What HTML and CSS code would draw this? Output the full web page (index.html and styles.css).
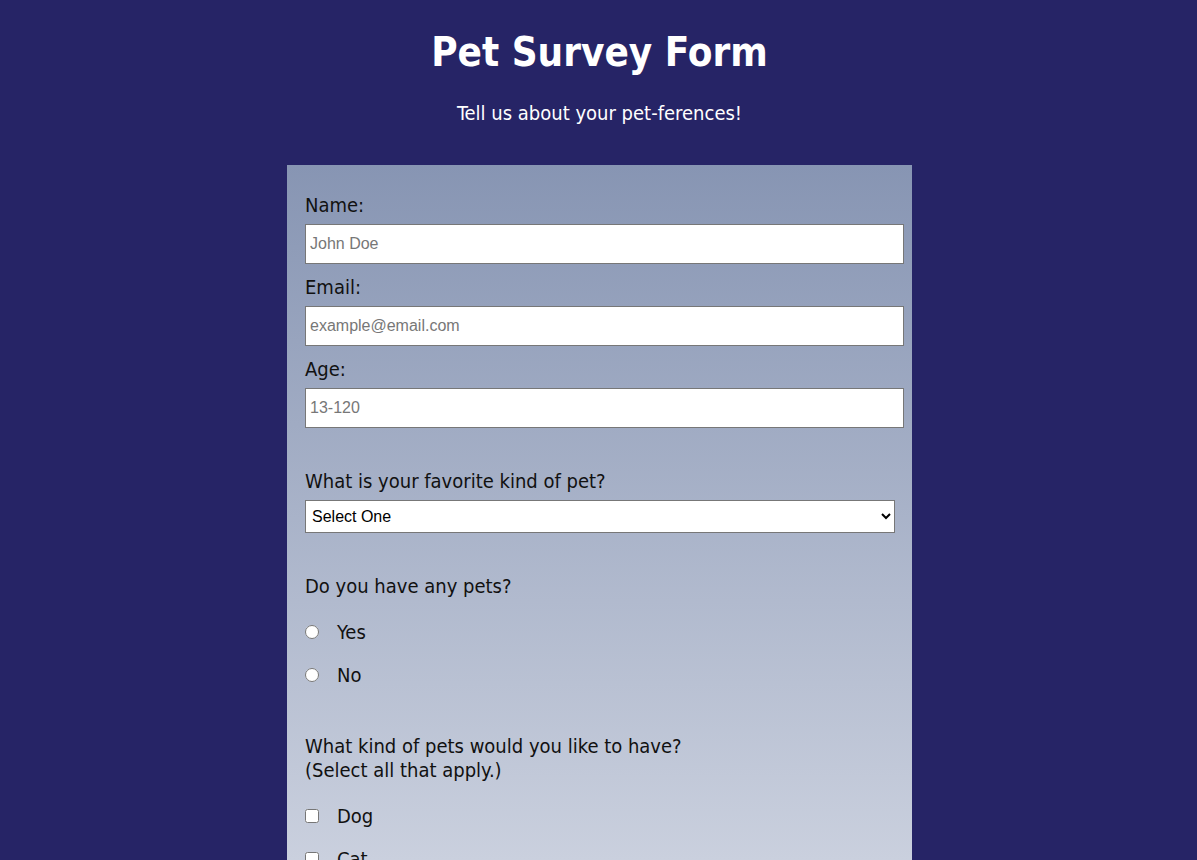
FILE: index.html
```html
<!DOCTYPE html>
<html lang="en">
<head>
<meta charset="utf-8">
<title>Pet Survey Form</title>
<link rel="stylesheet" href="styles.css">
</head>
<body>
<header class="header">
  <h1 class="title">Pet Survey Form</h1>
  <p class="description">Tell us about your pet-ferences!</p>
</header>
<form class="survey">
  <div class="field">
    <label class="label" for="name">Name:</label>
    <input class="text-input" id="name" type="text" placeholder="John Doe">
  </div>
  <div class="field">
    <label class="label" for="email">Email:</label>
    <input class="text-input" id="email" type="email" placeholder="example@email.com">
  </div>
  <div class="field">
    <label class="label" for="age">Age:</label>
    <input class="text-input" id="age" type="number" placeholder="13-120">
  </div>
  <div class="group">
    <label class="label" for="fav">What is your favorite kind of pet?</label>
    <select class="select" id="fav">
      <option>Select One</option>
      <option>Dog</option>
      <option>Cat</option>
    </select>
  </div>
  <div class="group">
    <p class="question">Do you have any pets?</p>
    <label class="choice"><input class="radio" type="radio" name="has"><span>Yes</span></label>
    <label class="choice"><input class="radio" type="radio" name="has"><span>No</span></label>
  </div>
  <div class="group group-last">
    <p class="question">What kind of pets would you like to have?<br>(Select all that apply.)</p>
    <label class="choice"><input class="check" type="checkbox"><span>Dog</span></label>
    <label class="choice"><input class="check" type="checkbox"><span>Cat</span></label>
  </div>
</form>
</body>
</html>
```
FILE: styles.css
```css
* { box-sizing: border-box; }
html, body { margin: 0; padding: 0; }
body {
  background: #262466;
  font-family: "DejaVu Sans Condensed", "DejaVu Sans", sans-serif;
  color: #111;
  min-height: 860px;
  padding-left: 2px;
}
.header { text-align: center; color: #fff; padding-top: 28px; }
.title { margin: 0; font-size: 40px; line-height: 48px; font-weight: bold; }
.description { margin: 25px 0 0; font-size: 20px; line-height: 24px; }
.survey {
  width: 625px;
  margin: 40px auto 0;
  padding: 28px 8px 40px 18px;
  background: linear-gradient(180deg, #8795b3 0px, #cad0de 695px, #e4e7ef 1100px);
  min-height: 1100px;
}
.field { display: flex; flex-direction: column; margin-bottom: 11px; }
.label, .question { display: block; font-size: 20px; line-height: 24px; margin: 0; }
.text-input {
  margin-top: 7px;
  height: 40px;
  width: 599px;
  border: 1px solid #777;
  border-radius: 0;
  padding: 0 4px;
  font-family: "Liberation Sans", Arial, sans-serif;
  font-size: 16px;
  background: #fff;
}
.text-input::placeholder { color: #777; }
.group { margin-top: 41px; }
.group-last { margin-top: 47px; }
.select {
  display: block;
  margin-top: 7px;
  width: 590px;
  height: 33px;
  font-family: "Liberation Sans", Arial, sans-serif;
  font-size: 16px;
  border: 1px solid #777;
  border-radius: 0;
  background: #fff;
  color: #000;
  padding: 0 2px;
}
.choice { display: flex; align-items: center; font-size: 20px; line-height: 24px; margin-top: 19px; }
.question + .choice { margin-top: 22px; }
.radio, .check { margin: 0 18px 0 0; width: 14px; height: 14px; flex: none; }
.choice span { display: block; }
```
